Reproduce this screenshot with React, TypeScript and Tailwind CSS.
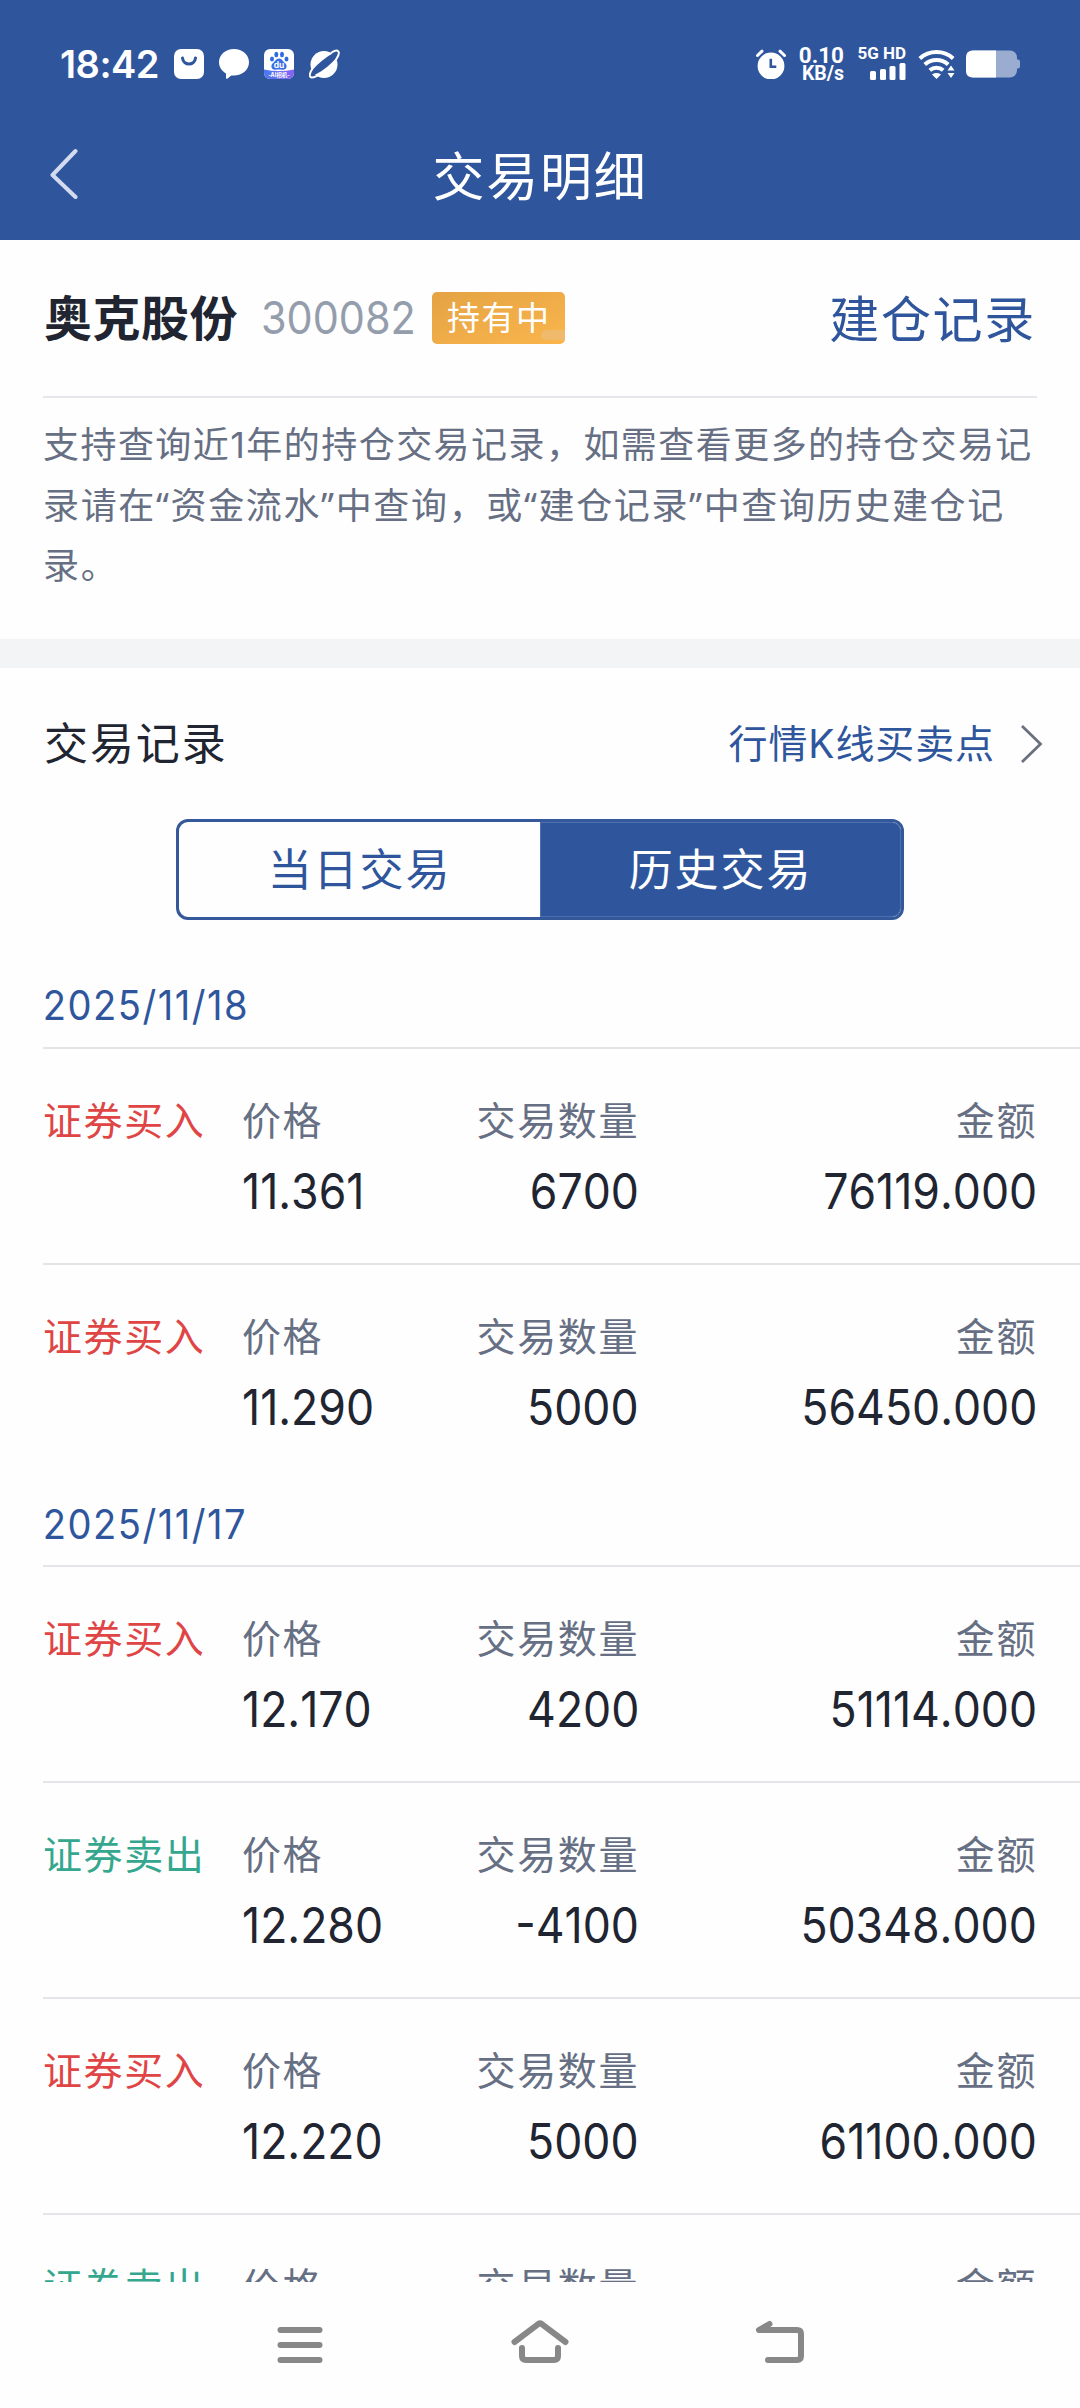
import React, { useState } from 'react';
import clsx from 'clsx';

interface TradeRecord {
  id: string;
  type: 'buy' | 'sell';
  price: string;
  quantity: string;
  amount: string;
}

interface TradeGroup {
  date: string;
  records: TradeRecord[];
}

const tradeGroups: TradeGroup[] = [
  {
    date: '2025/11/18',
    records: [
      { id: '1118-1', type: 'buy', price: '11.361', quantity: '6700', amount: '76119.000' },
      { id: '1118-2', type: 'buy', price: '11.290', quantity: '5000', amount: '56450.000' },
    ],
  },
  {
    date: '2025/11/17',
    records: [
      { id: '1117-1', type: 'buy', price: '12.170', quantity: '4200', amount: '51114.000' },
      { id: '1117-2', type: 'sell', price: '12.280', quantity: '-4100', amount: '50348.000' },
      { id: '1117-3', type: 'buy', price: '12.220', quantity: '5000', amount: '61100.000' },
      { id: '1117-4', type: 'sell', price: '', quantity: '', amount: '' },
    ],
  },
];

const noticeLines = [
  '支持查询近1年的持仓交易记录，如需查看更多的持仓交易记',
  '录请在“资金流水”中查询，或“建仓记录”中查询历史建仓记',
  '录。',
];

const StatusBar: React.FC = () => (
  <div className="flex h-[128px] items-center justify-between pr-[60px] pl-[60px] text-white">
    <div className="flex items-center">
      <span className="w-[114px] text-[38px] leading-[40px] font-semibold tracking-[-0.5px] whitespace-nowrap">18:42</span>
      <svg className="h-[30px] w-[30px]" viewBox="0 0 30 30">
        <rect width="30" height="30" rx="7" fill="#fff" />
        <path d="M8.5 9c.8 8 12.200 8 13 0" fill="none" stroke="#2f569d" strokeWidth="3" strokeLinecap="round" />
      </svg>
      <svg className="ml-[15px] h-[30px] w-[30px]" viewBox="0 0 30 30">
        <path d="M15 0c8.300 0 15 5.900 15 13.300S23.300 26.600 15 26.600c-1 0-1.900-.1-2.700-.2L8.600 29.500c-.7.500-1.600.1-1.600-.8V24.400C2.800 22 0 18 0 13.300 0 5.900 6.700 0 15 0z" fill="#fff" />
      </svg>
      <svg className="ml-[15px] h-[30px] w-[30px]" viewBox="0 0 30 30">
        <defs>
          <linearGradient id="duBand" x1="0" x2="1" y1="0" y2="0">
            <stop offset="0" stopColor="#4a78f0" />
            <stop offset="1" stopColor="#8a62f5" />
          </linearGradient>
          <clipPath id="duClip">
            <rect width="30" height="30" rx="6" />
          </clipPath>
        </defs>
        <g clipPath="url(#duClip)">
          <rect width="30" height="30" fill="#fff" />
          <path d="M0 20.500Q15 23.500 30 20.500V30H0z" fill="url(#duBand)" />
          <ellipse cx="8" cy="10" rx="2" ry="2.600" fill="#2f6be0" />
          <ellipse cx="12.300" cy="5.500" rx="2" ry="2.700" fill="#2f6be0" />
          <ellipse cx="18" cy="5.500" rx="2" ry="2.700" fill="#2f6be0" />
          <ellipse cx="22.500" cy="10" rx="2" ry="2.600" fill="#2f6be0" />
          <path d="M15 9.500c3 0 4 3 6 4.600 3 2.500 1.500 7-2.200 6.600-2.600-.3-5-.3-7.600 0-3.700.4-5.200-4.100-2.200-6.600 2-1.600 3-4.600 6-4.600z" fill="#3a6fe6" />
          <text x="15" y="19.300" fill="#fff" fontSize="8.500" fontWeight="700" textAnchor="middle">du</text>
          <text x="15" y="28.300" fill="#fff" fontSize="5.500" fontWeight="700" textAnchor="middle">-AI相机-</text>
        </g>
      </svg>
      <svg className="ml-[15px] h-[30px] w-[31px]" viewBox="0 0 31 30">
        <circle cx="15" cy="15.500" r="13.500" fill="#fff" />
        <ellipse cx="15.500" cy="14.800" rx="18" ry="4" transform="rotate(-39 15.500 14.800)" fill="#2f569d" />
        <path d="M3.500 19.500C.5 24 0 27.500 2 28.300c1.500.6 4-.2 6.500-1.600M22.500 3.500c3-1.800 5.800-2.300 6.800-1.200 1.200 1.300.2 4.500-2 8" fill="none" stroke="#fff" strokeWidth="2" strokeLinecap="round" />
      </svg>
    </div>

    <div className="flex items-center">
      <svg className="h-[30px] w-[30px]" viewBox="0 0 30 30">
        <circle cx="15" cy="17" r="13.400" fill="#fff" />
        <path d="M1.500 6.500 6 2.200M28.500 6.500 24 2.200" stroke="#fff" strokeWidth="3" strokeLinecap="round" />
        <path d="M14.800 9.800v8h5.500" fill="none" stroke="#2f569d" strokeWidth="2.600" />
      </svg>
      <div className="mt-[2px] ml-[10px] flex w-[48px] flex-col items-end font-[Roboto,sans-serif] font-bold whitespace-nowrap">
        <span className="text-[22.500px] leading-[18px]">0.10</span>
        <span className="text-[19.500px] leading-[20px]">KB/s</span>
      </div>
      <div className="mb-[3px] ml-[12px] flex w-[50px] flex-col items-end">
        <span className="font-[Roboto,sans-serif] text-[17px] leading-[16px] font-bold whitespace-nowrap">5G HD</span>
        <svg className="mt-[2px] h-[17px] w-[36px]" viewBox="0 0 36 17">
          <rect x="0" y="8" width="6" height="9" rx="1.500" fill="#fff" />
          <rect x="10" y="6" width="6" height="11" rx="1.500" fill="#fff" />
          <rect x="19.500" y="3" width="6" height="14" rx="1.500" fill="#fff" />
          <rect x="29.500" y="0" width="6" height="17" rx="1.500" fill="#fff" />
        </svg>
      </div>
      <svg className="ml-[12px] h-[30px] w-[38px]" viewBox="0 0 38 30">
        <path d="M1.800 9.500a25 25 0 0 1 33.400 0" fill="none" stroke="#fff" strokeWidth="4" />
        <path d="M6.800 15.500a17.500 17.500 0 0 1 23.400 0" fill="none" stroke="#fff" strokeWidth="4" />
        <path d="M11.800 21.300a10.300 10.300 0 0 1 13.400 0" fill="none" stroke="#fff" strokeWidth="4" />
        <path d="M14 25.500q4.500-2.800 9 0L18.500 30z" fill="#fff" />
        <path d="M29.500 21.500 33 16.500l3.500 5zM29.500 24l3.500 5 3.500-5z" fill="#fff" />
      </svg>
      <svg className="ml-[10px] h-[28px] w-[54px]" viewBox="0 0 54 28">
        <rect x="0" y="0.500" width="51" height="27" rx="7" fill="#9aadd0" />
        <path d="M51 9.500h1q2 0 2 2v5q0 2-2 2h-1z" fill="#9aadd0" />
        <path d="M7 .5H30v27H7q-7 0-7-7v-13q0-7 7-7z" fill="#fff" />
      </svg>
    </div>
  </div>
);

const Header: React.FC = () => (
  <header className="h-[240px] bg-[#2f569d]">
    <StatusBar />
    <div className="grid h-[96px] grid-cols-[1fr_auto_1fr] items-center px-[48px] text-white">
      <button aria-label="返回" className="mb-[4px] w-[30px]">
        <svg className="h-[52px] w-[30px]" viewBox="0 0 30 52">
          <path d="M27.500 3 4.500 27l23 22" fill="none" stroke="#d3dcef" strokeWidth="4" strokeLinecap="round" strokeLinejoin="round" />
        </svg>
      </button>
      <h1 className="mt-[3px] text-[52px] leading-[60px] tracking-[1.700px]">交易明细</h1>
    </div>
  </header>
);

const StockInfo: React.FC = () => (
  <section className="h-[399px] px-[43px]">
    <div className="flex h-[158px] items-center border-b-2 border-[#e5e7ec]">
      <h2 className="mt-[2px] ml-[1px] text-[48px] leading-[56px] font-bold tracking-[0.500px] text-[#202531]">奥克股份</h2>
      <span className="-mr-[14px] ml-[23px] origin-left scale-x-[0.92] text-[45px] leading-[56px] text-[#949dac]">300082</span>
      <span className="relative ml-[17px] flex h-[52px] w-[133px] items-center justify-center overflow-hidden rounded-[5px] bg-gradient-to-br from-[#e4a344] to-[#fab54c] text-[33px] leading-[40px] tracking-[1.500px] text-white">
        持有中
        <span className="absolute right-0 bottom-[4px] h-[10px] w-[24px] rounded-l-full bg-[#efba6c]" />
      </span>
      <a className="mt-[3px] mr-[1px] ml-auto text-[50px] leading-[60px] tracking-[1.700px] text-[#2f569d]">建仓记录</a>
    </div>
    <div className="pt-[17px] text-[36px] leading-[60.500px] tracking-[1.450px] text-[#666f83]">
      {noticeLines.map(line => (
        <p
          key={line}
          className="whitespace-nowrap not-first:font-['Noto_Sans','Noto_Sans_CJK_SC',sans-serif] not-first:tracking-[1.650px]"
        >
          {line}
        </p>
      ))}
    </div>
  </section>
);

interface FieldProps {
  label: string;
  value: string;
  align?: 'left' | 'right';
  className?: string;
}

const Field: React.FC<FieldProps> = ({ label, value, align = 'left', className }) => (
  <div className={clsx('flex flex-col', align === 'right' && 'items-end', className)}>
    <span className="text-[39px] leading-[60px] tracking-[1.600px] text-[#666f83]">{label}</span>
    <span
      className={clsx(
        'mt-[11px] scale-x-[0.91] text-[49px] leading-[60px] text-[#202531] [font-kerning:none]',
        align === 'right' ? 'origin-right' : 'origin-left'
      )}
    >
      {value}
    </span>
  </div>
);

const TradeRow: React.FC<{ record: TradeRecord }> = ({ record }) => (
  <div className="ml-[43px] flex h-[216px] border-t-2 border-[#e4e5e8] pt-[42px] pr-[43px] whitespace-nowrap">
    <span
      className={clsx(
        'w-[199px] text-[39px] leading-[60px] tracking-[1.600px]',
        record.type === 'buy' ? 'text-[#e04545]' : 'text-[#35a78f]'
      )}
    >
      {record.type === 'buy' ? '证券买入' : '证券卖出'}
    </span>
    <Field label="价格" value={record.price} className="w-[150px]" />
    <Field label="交易数量" value={record.quantity} align="right" className="w-[247px]" />
    <Field label="金额" value={record.amount} align="right" className="flex-1" />
  </div>
);

const NavigationBar: React.FC = () => (
  <nav className="flex h-[126px] shrink-0 items-start bg-[#fefefe] pt-[35px] pl-[274px]">
    <svg className="h-[56px] w-[52px]" viewBox="0 0 52 56" fill="none" stroke="#888" strokeWidth="6" strokeLinecap="round">
      <path d="M6.500 13h39M6.500 28h39M6.500 43h39" />
    </svg>
    <svg className="ml-[184px] h-[56px] w-[60px]" viewBox="0 0 60 56" fill="none" stroke="#888" strokeWidth="6" strokeLinecap="round" strokeLinejoin="round">
      <path d="M4.500 25 28.500 6.800q1.500-1 3 0L55.500 25" />
      <path d="M12 31v8q0 4 4 4h28q4 0 4-4v-8" />
    </svg>
    <svg className="ml-[184px] h-[56px] w-[52px]" viewBox="0 0 52 56" fill="none" stroke="#888" strokeWidth="6" strokeLinecap="round" strokeLinejoin="round">
      <path d="M15.500 7 5 13h38q4 0 4 4v22q0 4-4 4H14" />
    </svg>
  </nav>
);

const tabs = [
  { key: 'today', label: '当日交易' },
  { key: 'history', label: '历史交易' },
];

export default function App() {
  const [activeTab, setActiveTab] = useState('history');

  return (
    <div className="flex h-[2408px] w-[1080px] flex-col overflow-hidden bg-[#fefefe] font-[Inter,'Noto_Sans_CJK_SC',sans-serif]">
      <main className="h-[2282px] overflow-hidden">
        <Header />
        <StockInfo />
        <div className="h-[29px] bg-[#f3f4f6]" />

        <section>
          <div className="flex h-[151px] items-center pr-[37px] pl-[44px]">
            <h2 className="text-[44px] leading-[60px] tracking-[1.900px] text-[#202531]">交易记录</h2>
            <a className="ml-auto flex items-center text-[39px] leading-[60px] tracking-[0.900px] text-[#2f569d]">
              行情K线买卖点
              <svg className="ml-[25px] h-[40px] w-[23px]" viewBox="0 0 23 40">
                <path d="M2 2 20.500 20 2 38" fill="none" stroke="#6b7080" strokeWidth="2.800" />
              </svg>
            </a>
          </div>

          <div className="mx-auto flex h-[101px] w-[728px] overflow-hidden rounded-[12px] border-[3px] border-[#35589a]">
            {tabs.map(tab => (
              <button
                key={tab.key}
                onClick={() => setActiveTab(tab.key)}
                className={clsx(
                  'flex-1 text-[44px] leading-[60px] tracking-[1.900px]',
                  activeTab === tab.key
                    ? 'rounded-r-[9px] bg-[#2f569d] text-white shadow-[inset_0_0_0_1px_#4c6fad]'
                    : 'text-[#2f569d]'
                )}
              >
                {tab.label}
              </button>
            ))}
          </div>

          <div className="pt-[40px]">
            {tradeGroups.map(group => (
              <div key={group.date}>
                <h3 className="h-[86.500px] w-[300px] origin-left scale-x-[0.93] pt-[15px] pl-[46px] text-[41px] leading-[60px] tracking-[1.600px] whitespace-nowrap text-[#2f569d] [font-kerning:none]">
                  {group.date}
                </h3>
                {group.records.map(record => (
                  <TradeRow key={record.id} record={record} />
                ))}
              </div>
            ))}
          </div>
        </section>
      </main>
      <NavigationBar />
    </div>
  );
}
